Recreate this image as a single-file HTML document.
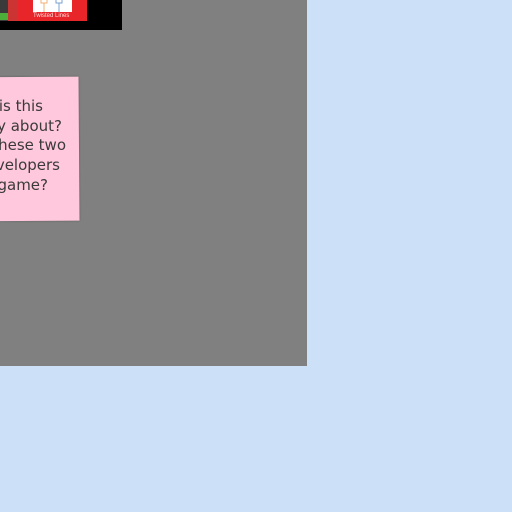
<!DOCTYPE html>
<html><head><style>
html,body{margin:0;padding:0;width:512px;height:512px;overflow:hidden;background:#cce1f7;font-family:"Liberation Sans",sans-serif}
.a{position:absolute}
.clip{position:absolute;left:0;top:0;width:512px;height:512px;overflow:hidden}
.line{position:absolute;white-space:nowrap;font-family:"DejaVu Sans",sans-serif;font-size:15px;color:#3a3a3a;text-align:right}
</style></head><body>
<div class="clip">
<div class="a" style="left:0;top:0;width:307px;height:366px;background:#808080"></div>
<div class="a" style="left:0;top:0;width:122px;height:30px;background:#000"></div>
<div class="a" style="left:0;top:0;width:18px;height:21px;background:#3a3a3a"></div>
<div class="a" style="left:0;top:13px;width:8px;height:7px;background:#4caf3a"></div>
<div class="a" style="left:8px;top:0;width:10px;height:21px;background:#c33"></div>
<div class="a" style="left:18px;top:0;width:69px;height:21px;background:#e8262a"></div>
<div class="a" style="left:33px;top:0;width:39px;height:12px;background:#fff"></div>
<svg class="a" style="left:38px;top:0" width="30" height="12"><path d="M3 0v3h6v-3M6 3v9" stroke="#f0b070" fill="none" stroke-width="1"/><path d="M18 0v3h6v-3M21 3v9" stroke="#7aa0d0" fill="none" stroke-width="1"/></svg>
<div class="a" style="left:33px;top:13px;font-size:6px;color:#fdd;white-space:nowrap">Twisted Lines</div>
<div class="a" style="left:-40px;top:77px;width:119px;height:144px;background:#ffc8dc;box-shadow:0 0 2px rgba(0,0,0,.3);transform:rotate(-0.4deg)"></div>
<div class="line" style="right:469px;top:97px">What is this</div>
<div class="line" style="right:450px;top:117px">company about?</div>
<div class="line" style="right:446px;top:136px">Are these two</div>
<div class="line" style="right:452px;top:156px">developers</div>
<div class="line" style="right:464px;top:176px">the game?</div>
</div>
</body></html>
